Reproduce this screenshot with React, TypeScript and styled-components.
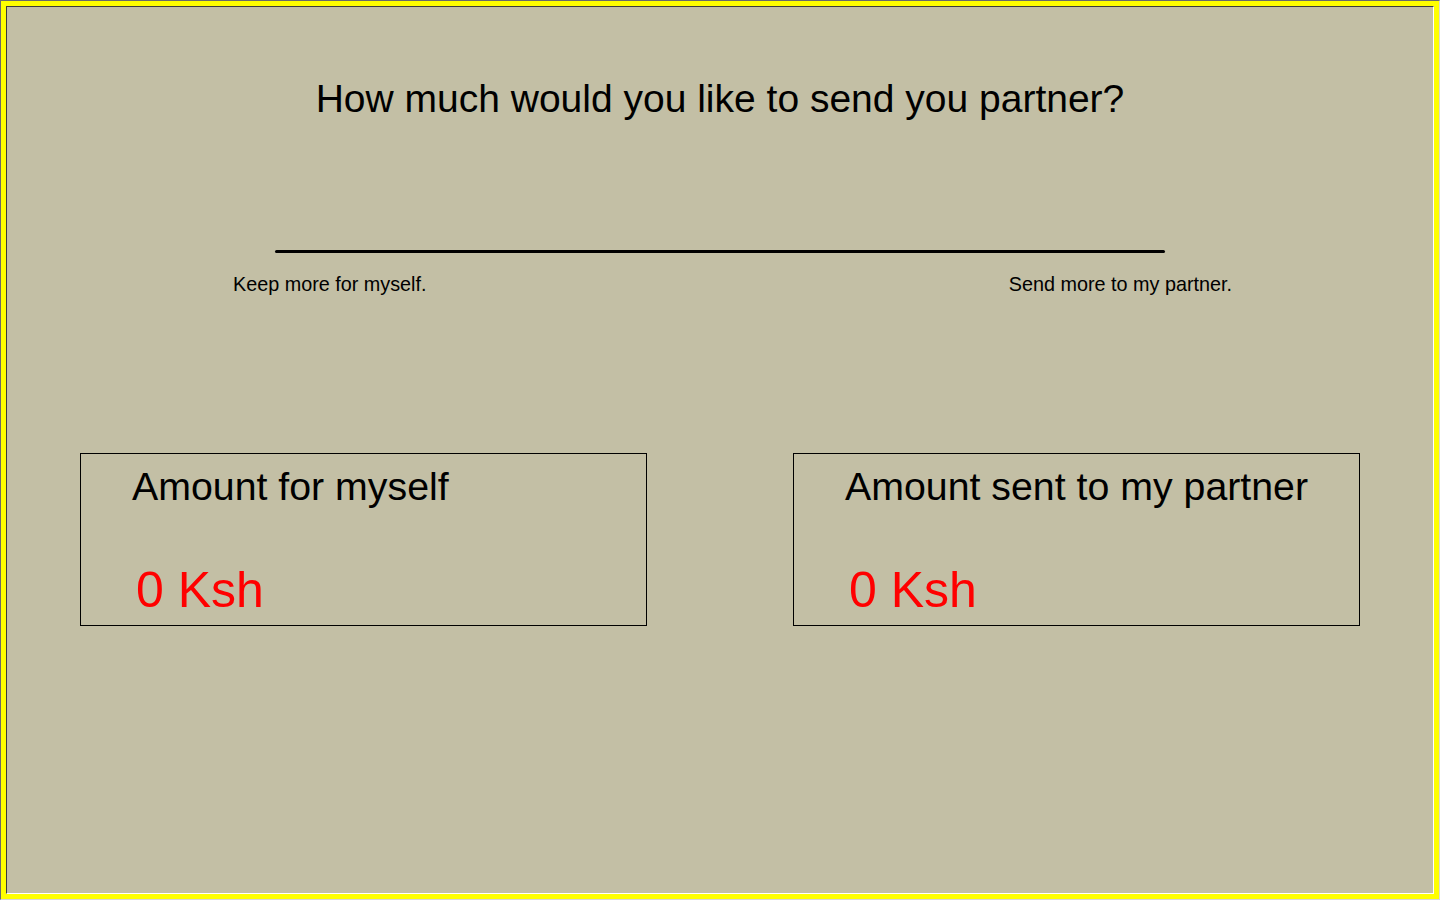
import React from "react";
import styled, { createGlobalStyle } from "styled-components";

const GlobalStyle = createGlobalStyle`
  html, body {
    margin: 0;
    padding: 0;
    background: #c3bfa5;
  }
  body {
    font-family: "Liberation Sans", Arial, sans-serif;
    color: #000;
  }
  * { box-sizing: border-box; }
`;

const Frame = styled.div`
  width: 1440px;
  height: 900px;
  background: #ffff00;
  border: 1px solid;
  border-color: #6a6a6a #d8d8d8 #d8d8d8 #6a6a6a;
  padding: 5px;
`;

const Screen = styled.main`
  width: 100%;
  height: 100%;
  background: #c3bfa5;
  border: 1px solid;
  border-color: #3c3c3c #ffffff #ffffff #3c3c3c;
  padding-top: 69px;
  display: flex;
  flex-direction: column;
`;

const Question = styled.h1`
  margin: 0;
  font-size: 39px;
  font-weight: 400;
  line-height: 45px;
  text-align: center;
`;

const SliderTrack = styled.div`
  align-self: center;
  margin-top: 129px;
  width: 890px;
  height: 3px;
  background: #000;
  border-radius: 1.5px;
`;

const LabelRow = styled.div`
  margin-top: 20px;
  padding: 0 201px 0 226px;
  display: flex;
  justify-content: space-between;
`;

const EndLabel = styled.span`
  font-size: 19.8px;
  line-height: 22px;
`;

const BoxRow = styled.div`
  margin-top: 158px;
  display: flex;
  justify-content: center;
  gap: 146px;
`;

const AmountBox = styled.section`
  width: 567px;
  height: 173px;
  border: 1px solid #000;
  padding: 10px 0 0 51px;
  display: flex;
  flex-direction: column;
  align-items: flex-start;
`;

const BoxTitle = styled.h2`
  margin: 0;
  font-size: 39.3px;
  font-weight: 400;
  line-height: 45px;
  white-space: nowrap;
`;

const BoxValue = styled.div`
  margin: 53px 0 0 4px;
  font-size: 50px;
  line-height: 56px;
  color: #ff0000;
  white-space: nowrap;
`;

export default function App() {
  return (
    <>
      <GlobalStyle />
      <Frame>
        <Screen>
          <Question>How much would you like to send you partner?</Question>
          <SliderTrack />
          <LabelRow>
            <EndLabel>Keep more for myself.</EndLabel>
            <EndLabel>Send more to my partner.</EndLabel>
          </LabelRow>
          <BoxRow>
            <AmountBox>
              <BoxTitle>Amount for myself</BoxTitle>
              <BoxValue>0 Ksh</BoxValue>
            </AmountBox>
            <AmountBox>
              <BoxTitle>Amount sent to my partner</BoxTitle>
              <BoxValue>0 Ksh</BoxValue>
            </AmountBox>
          </BoxRow>
        </Screen>
      </Frame>
    </>
  );
}
